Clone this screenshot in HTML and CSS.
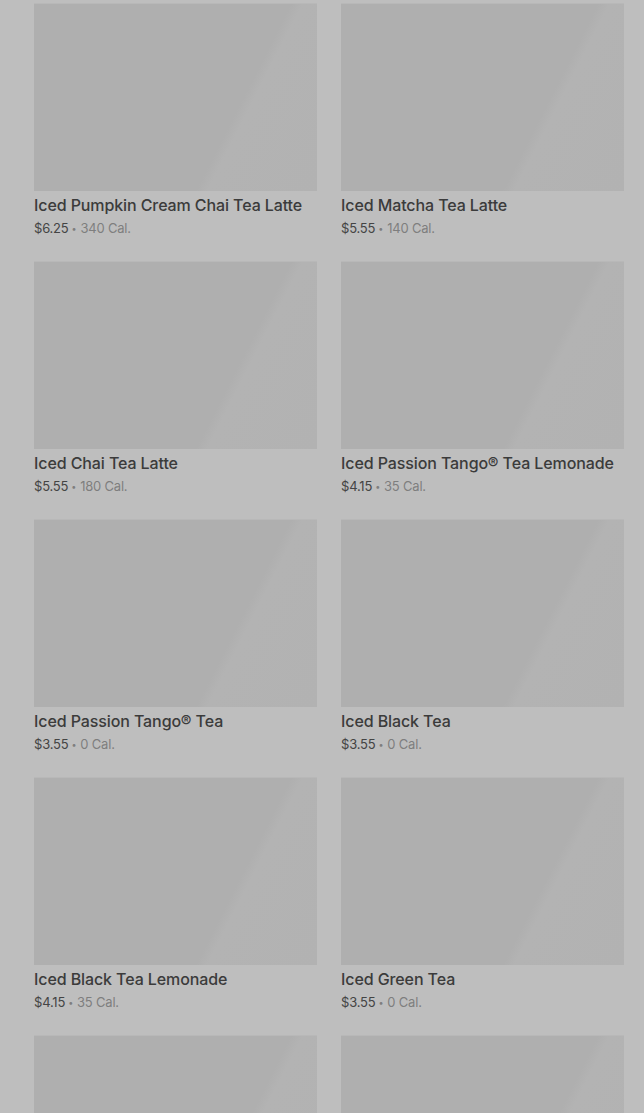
FILE: index.html
```html
<!DOCTYPE html>
<html lang="en">
<head>
    <meta charset="UTF-8">
    <meta name="viewport" content="width=device-width, initial-scale=1.0">
    <title>Iced Teas</title>
    <link rel="stylesheet" href="styles.css">
</head>
<body>
    <div class="menu-grid">
        <div class="item">
            <div class="item-image"></div>
            <div class="item-name">Iced Pumpkin Cream Chai Tea Latte</div>
            <div class="item-meta"><span class="price">$6.25</span><span class="dot">•</span>340 Cal.</div>
        </div>
        <div class="item">
            <div class="item-image"></div>
            <div class="item-name">Iced Matcha Tea Latte</div>
            <div class="item-meta"><span class="price">$5.55</span><span class="dot">•</span>140 Cal.</div>
        </div>
        <div class="item">
            <div class="item-image"></div>
            <div class="item-name">Iced Chai Tea Latte</div>
            <div class="item-meta"><span class="price">$5.55</span><span class="dot">•</span>180 Cal.</div>
        </div>
        <div class="item">
            <div class="item-image"></div>
            <div class="item-name">Iced Passion Tango® Tea Lemonade</div>
            <div class="item-meta"><span class="price">$4.15</span><span class="dot">•</span>35 Cal.</div>
        </div>
        <div class="item">
            <div class="item-image"></div>
            <div class="item-name">Iced Passion Tango® Tea</div>
            <div class="item-meta"><span class="price">$3.55</span><span class="dot">•</span>0 Cal.</div>
        </div>
        <div class="item">
            <div class="item-image"></div>
            <div class="item-name">Iced Black Tea</div>
            <div class="item-meta"><span class="price">$3.55</span><span class="dot">•</span>0 Cal.</div>
        </div>
        <div class="item">
            <div class="item-image"></div>
            <div class="item-name">Iced Black Tea Lemonade</div>
            <div class="item-meta"><span class="price">$4.15</span><span class="dot">•</span>35 Cal.</div>
        </div>
        <div class="item">
            <div class="item-image"></div>
            <div class="item-name">Iced Green Tea</div>
            <div class="item-meta"><span class="price">$3.55</span><span class="dot">•</span>0 Cal.</div>
        </div>
        <div class="item">
            <div class="item-image"></div>
        </div>
        <div class="item">
            <div class="item-image"></div>
        </div>
    </div>
</body>
</html>
```

FILE: styles.css
```css
body, html {
    margin: 0;
    padding: 0;
    height: 100%;
    background-color: #bebebe;
    font-family: Inter, "Liberation Sans", sans-serif;
    overflow: hidden;
}
.menu-grid {
    display: grid;
    grid-template-columns: 283px 283px;
    column-gap: 24px;
    row-gap: 22px;
    padding: 3px 20px 0 34px;
}
.item {
    display: flex;
    flex-direction: column;
}
.item-image {
    height: 187px;
    border-top: 1px solid #b8b8b8;
    background: linear-gradient(117deg, #afafaf 0%, #afafaf 68%, #b3b3b3 71%, #b2b2b2 100%);
}
.item-name {
    font-size: 16px;
    font-weight: 500;
    line-height: 24px;
    letter-spacing: -0.1px;
    color: #3b3b3b;
    margin-top: 2px;
    white-space: nowrap;
}
.item-meta {
    display: flex;
    align-items: center;
    height: 22px;
    font-size: 13px;
    letter-spacing: -0.2px;
    color: #7e7e7e;
}
.price {
    color: #444;
}
.dot {
    font-size: 9px;
    margin: 0 4px 0 3px;
}
```
